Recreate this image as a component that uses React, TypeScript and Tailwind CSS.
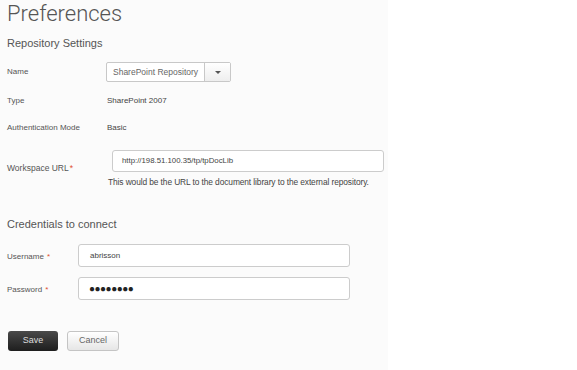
import React from "react";

const Req = ({ space }: { space?: boolean }) => (
  <span className={space ? "text-[#e0502f] ml-[3px]" : "text-[#e0502f] ml-[1px]"}>*</span>
);

export default function App() {
  return (
    <div className="w-[577px] h-[370px] bg-white" style={{ fontFamily: '"Liberation Sans", Arial, sans-serif' }}>
      <div className="w-[388px] h-[370px] bg-[#fbfbfb] pl-[7px] flex flex-col">
        <div className="h-[28px] text-[22px] leading-[28px] text-[#555] font-light" style={{ fontFamily: 'Roboto, "Liberation Sans", sans-serif' }}>
          Preferences
        </div>
        <div className="h-[30px] pt-[8px] text-[11px] leading-[14px] text-[#555]">Repository Settings</div>
        <div className="flex items-center h-[20px] mt-[4px]">
          <div className="w-[99px] text-[8px] text-[#555]">Name</div>
          <div className="flex h-[20px] w-[125px] border border-[#c8c8c8] rounded-[2px] bg-white">
            <div className="flex-1 flex items-center pl-[6px] text-[8.5px] text-[#666]">SharePoint Repository</div>
            <div className="w-[26px] border-l border-[#c8c8c8] flex items-center justify-center bg-gradient-to-b from-white to-[#eee]">
              <div className="w-0 h-0 border-l-[3px] border-r-[3px] border-t-[3px] border-l-transparent border-r-transparent border-t-[#555]" />
            </div>
          </div>
        </div>
        <div className="flex items-center h-[16px] mt-[11px]">
          <div className="w-[100px] text-[8px] text-[#555]">Type</div>
          <div className="text-[8px] text-[#444]">SharePoint 2007</div>
        </div>
        <div className="flex items-center h-[16px] mt-[11px]">
          <div className="w-[100px] text-[8px] text-[#555]">Authentication Mode</div>
          <div className="text-[8px] text-[#444]">Basic</div>
        </div>
        <div className="flex h-[22px] mt-[14px]">
          <div className="w-[105px] text-[8.5px] text-[#555] pt-[13px] leading-[10px]">Workspace URL<Req /></div>
          <div className="w-[272px] h-[22px] border border-[#ccc] rounded-[3px] bg-white flex items-center pl-[9px] text-[7.8px] text-[#444]">
            http://198.51.100.35/tp/tpDocLib
          </div>
        </div>
        <div className="pl-[101px] mt-[5px] text-[8.4px] leading-[10px] text-[#444] tracking-[-0.1px]">
          This would be the URL to the document library to the external repository.
        </div>
        <div className="mt-[30px] text-[11px] leading-[14px] text-[#555]">Credentials to connect</div>
        <div className="flex items-center h-[23px] mt-[13px]">
          <div className="w-[71px] text-[8px] text-[#555] pt-[2px]">Username<Req space /></div>
          <div className="w-[272px] h-[23px] border border-[#ccc] rounded-[3px] bg-white flex items-center pl-[11px] text-[8px] text-[#444]">
            abrisson
          </div>
        </div>
        <div className="flex items-center h-[23px] mt-[10px]">
          <div className="w-[71px] text-[8px] text-[#555] pt-[2px]">Password<Req space /></div>
          <div className="w-[272px] h-[23px] border border-[#ccc] rounded-[3px] bg-white flex items-center pl-[10px] text-[10px] text-[#222] tracking-[-0.5px]">
            ●●●●●●●●
          </div>
        </div>
        <div className="flex gap-[9px] mt-[31px] pl-[1px]">
          <div className="w-[50px] h-[20px] rounded-[3px] bg-gradient-to-b from-[#4a4a4a] to-[#1e1e1e] flex items-center justify-center text-[9px] text-[#ddd]">
            Save
          </div>
          <div className="w-[52px] h-[20px] rounded-[3px] border border-[#c4c4c4] bg-gradient-to-b from-white to-[#e6e6e6] flex items-center justify-center text-[9px] text-[#666]">
            Cancel
          </div>
        </div>
      </div>
    </div>
  );
}
